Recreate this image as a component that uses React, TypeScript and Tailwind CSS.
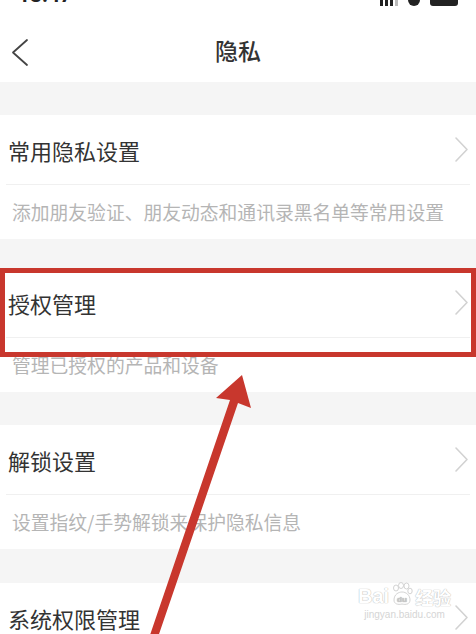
type Item = {
  title: string;
  desc?: string;
  highlight?: boolean;
};

const items: Item[] = [
  { title: "常用隐私设置", desc: "添加朋友验证、朋友动态和通讯录黑名单等常用设置" },
  { title: "授权管理", desc: "管理已授权的产品和设备", highlight: true },
  { title: "解锁设置", desc: "设置指纹/手势解锁来保护隐私信息" },
  { title: "系统权限管理" },
];

const gaps = ["h-[33px]", "h-[29px]", "h-[33px]", "h-[34px]"];

const Arrow = () => (
  <svg width="15" height="27" viewBox="0 0 15 27" fill="none">
    <path d="M2 2 L13 13.5 L2 25" stroke="#d2d2d2" strokeWidth="1.6" strokeLinecap="round" strokeLinejoin="round" />
  </svg>
);

const Section = ({ item }: { item: Item }) => (
  <div className="bg-white">
    <div className="relative">
      {/* Title row */}
      <div className="h-[69px] flex items-center justify-between pl-[8px] pr-[7px]">
        <span className="text-[22px] text-[#333333] leading-none">{item.title}</span>
        <Arrow />
      </div>
      {item.highlight && (
        <div className="absolute left-0 right-0 top-0 h-[89px] border-[5px] border-[#c8372d] pointer-events-none"></div>
      )}
    </div>
    {item.desc && (
      <>
        <div className="h-px bg-[#f0f0f0] ml-[6px] mr-[6px]"></div>
        <div className="h-[54px] flex items-center pl-[12px]">
          <span className="text-[18.8px] text-[#b5b5b5] leading-none">{item.desc}</span>
        </div>
      </>
    )}
  </div>
);

export default function App() {
  return (
    <div
      className="relative w-[476px] h-[634px] overflow-hidden bg-[#f5f5f5]"
      style={{ fontFamily: '"Noto Sans CJK SC", "Noto Sans", sans-serif' }}
    >
      {/* Header */}
      <div className="bg-white h-[82px] flex flex-col">
        {/* Status bar, mostly cut off */}
        <div className="h-[8px] overflow-hidden flex justify-between px-[18px]">
          <span className="-mt-[15px] text-[21px] font-bold text-[#222] leading-none font-['Roboto']">13:47</span>
          <div className="flex items-start gap-[10px] -mt-[4px]">
            <div className="flex items-end gap-[2px] h-[10px]">
              <div className="w-[3px] h-[10px] bg-[#222]"></div>
              <div className="w-[3px] h-[10px] bg-[#222]"></div>
              <div className="w-[3px] h-[10px] bg-[#222]"></div>
              <div className="w-[3px] h-[10px] bg-[#bbb]"></div>
            </div>
            <div className="w-[12px] h-[8px] bg-[#222] rounded-b-full mt-[2px]"></div>
            <div className="w-[28px] h-[10px] bg-[#222] rounded-[3px]"></div>
          </div>
        </div>
        <div className="flex-1 relative flex items-center justify-center">
          <svg className="absolute left-[10px] top-[30px]" width="20" height="29" viewBox="0 0 20 29" fill="none">
            <path d="M17 2 L3 14.5 L17 27" stroke="#444" strokeWidth="1.8" strokeLinecap="round" strokeLinejoin="round" />
          </svg>
          <span className="text-[23px] font-medium text-[#333] leading-none mt-[10px]">隐私</span>
        </div>
      </div>

      {items.map((item, i) => (
        <div key={item.title}>
          <div className={gaps[i]}></div>
          <Section item={item} />
        </div>
      ))}

      {/* Baidu jingyan watermark */}
      <div className="absolute left-[358px] top-[582px] flex flex-col items-center pointer-events-none">
        <div className="flex items-end gap-[2px] text-white font-bold leading-none [text-shadow:0_0_1px_#bdbdbd,0_0_1px_#bdbdbd]">
          <span className="text-[20px] font-['Liberation_Sans']">Bai</span>
          <svg width="22" height="24" viewBox="0 0 22 24">
            <g fill="white" stroke="#c8c8c8" strokeWidth="0.8">
              <ellipse cx="5" cy="6" rx="2.5" ry="3" />
              <ellipse cx="10" cy="3.5" rx="2.5" ry="3" />
              <ellipse cx="15.5" cy="4" rx="2.5" ry="3" />
              <ellipse cx="19" cy="9" rx="2.2" ry="2.8" />
              <path d="M3 18 C3 12 8 10 11 10 C15 10 19 13 19 18 C19 22 15 23 11 22 C7 23 3 22 3 18 Z" />
            </g>
            <text x="11" y="20" fontSize="8" textAnchor="middle" fill="#c8c8c8" fontFamily="Liberation Sans">du</text>
          </svg>
          <span className="text-[18px]">经验</span>
        </div>
        <span className="text-[10px] text-[#d5d5d5] leading-none mt-[4px] font-['Liberation_Sans']">jingyan.baidu.com</span>
      </div>

      {/* Annotation arrow */}
      <svg className="absolute inset-0 pointer-events-none" width="476" height="634" viewBox="0 0 476 634">
        <polygon points="242,375 251,408 238,403 157,640 149,638 230,400 216,398" fill="#c8372d" />
      </svg>
    </div>
  );
}
